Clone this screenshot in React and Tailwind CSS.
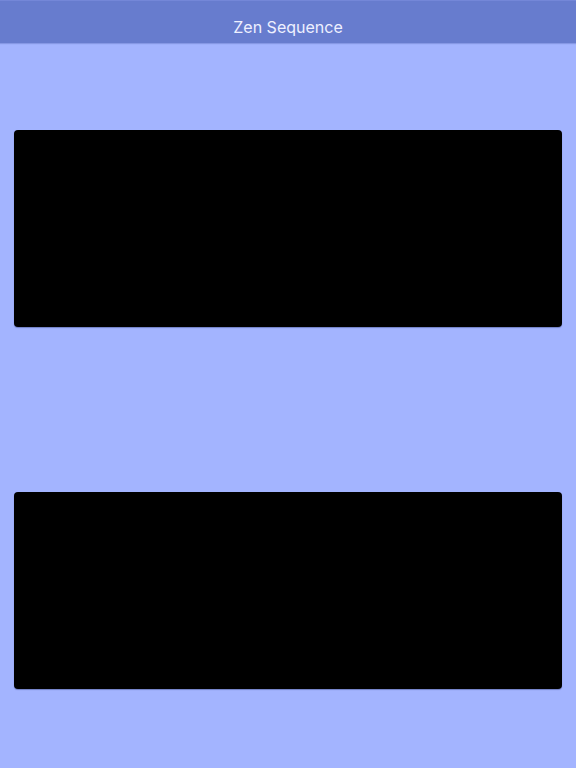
import React from 'react'

export default function App() {
  return (
    <div className="w-[576px] h-[768px] bg-[#a3b4ff] flex flex-col overflow-hidden" style={{ fontFamily: 'Inter, "Noto Sans", sans-serif' }}>
      <header className="h-[43px] shrink-0 bg-[#677cce] border-t border-[#7487d8] shadow-[0_1px_1px_rgba(80,100,180,0.35)] flex items-end justify-center pb-[8px]">
        <h1 className="text-[16px] font-normal text-[#eef0ff] leading-none">Zen Sequence</h1>
      </header>

      <main className="flex flex-col px-[14px] pt-[87px] gap-[165px]">
        <div className="h-[197px] bg-black rounded-[4px] shadow-[0_1px_1px_rgba(40,50,110,0.4)]" />
        <div className="h-[197px] bg-black rounded-[4px] shadow-[0_1px_1px_rgba(40,50,110,0.4)]" />
      </main>
    </div>
  )
}
